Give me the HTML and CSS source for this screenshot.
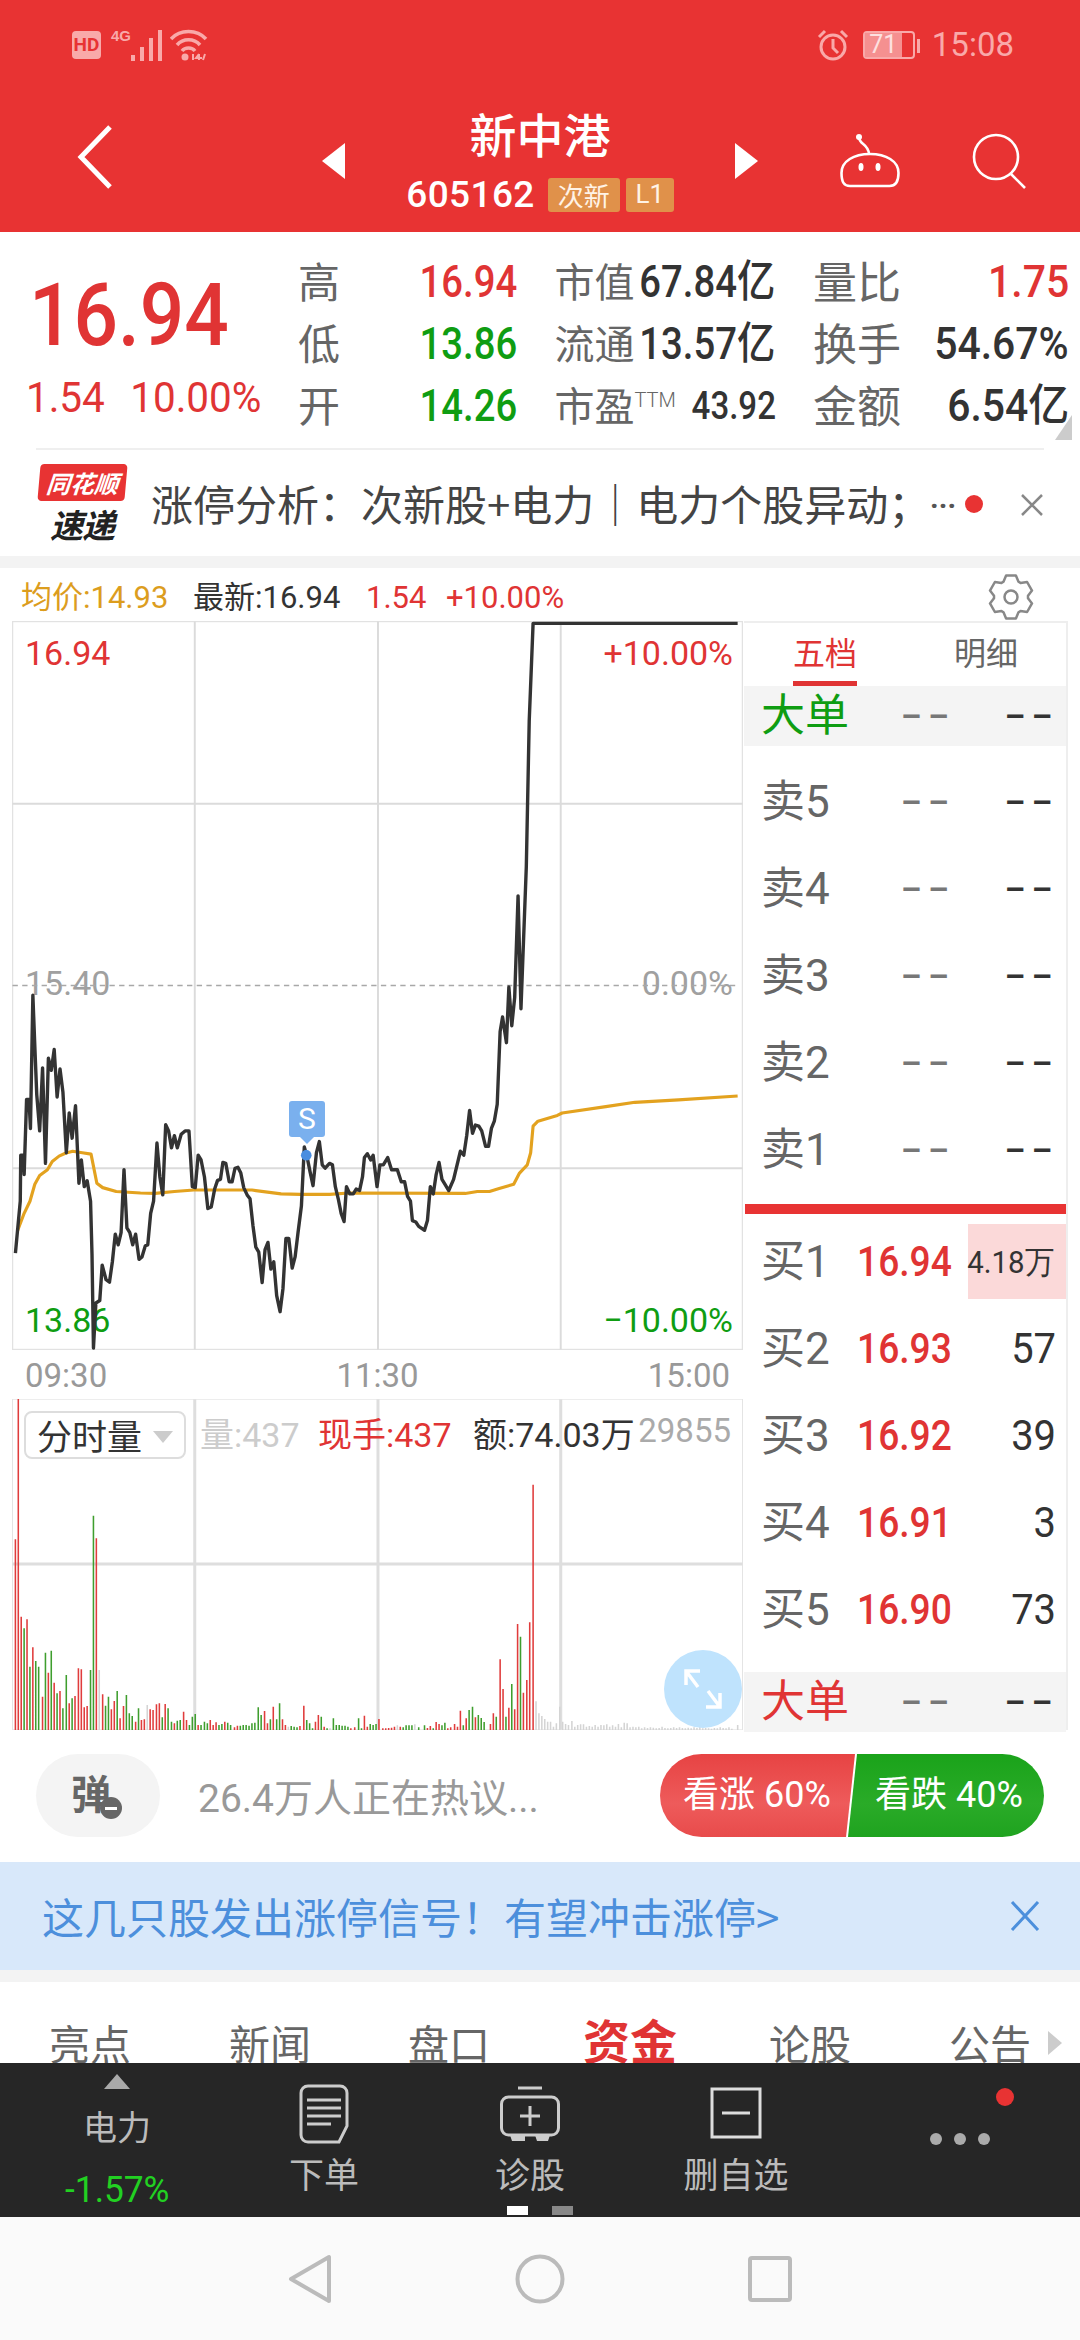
FILE: index.html
```html
<!DOCTYPE html>
<html lang="zh">
<head>
<meta charset="utf-8">
<title>新中港</title>
<link rel="stylesheet" href="styles.css">
</head>
<body>
<div class="page">
  <header class="head">
    <div class="status">
      <div class="status-left">
        <span class="hd">HD</span>
        <span class="net">4G</span>
        <svg class="signal" width="34" height="32" viewBox="0 0 34 32"><path d="M3 32v-6M12 32V18M21 32V9M30 32V1" stroke="#f9a9a9" stroke-width="4" fill="none"/></svg>
        <svg class="wifi" width="38" height="32" viewBox="0 0 38 32"><g fill="none" stroke="#f9a9a9" stroke-width="3.5"><path d="M1 10C10 0 27 0 36 10"/><path d="M7 16C13 9 24 9 30 16"/><path d="M12 22C15 18 22 18 25 22"/></g><circle cx="15" cy="28" r="3.5" fill="#f9a9a9"/><path d="M23 25v6M29 25l-3 4h6M29 25v6M35 25l-2 6" stroke="#f9a9a9" stroke-width="2" fill="none"/></svg>
      </div>
      <div class="status-right">
        <svg width="32" height="32" viewBox="0 0 32 32"><g fill="none" stroke="#f9a9a9" stroke-width="3"><circle cx="16" cy="18" r="12"/><path d="M16 10v9l5 5M2 8l6-6M30 8l-6-6"/></g></svg>
        <span class="battery"><span class="battery-num">71</span></span>
        <span class="clock">15:08</span>
      </div>
    </div>
    <nav class="nav">
      <svg class="back" width="36" height="64" viewBox="0 0 36 64"><path d="M33 2L4 32l29 30" fill="none" stroke="#fff" stroke-width="5"/></svg>
      <svg class="tri" width="23" height="36" viewBox="0 0 23 36"><path d="M23 0v36L0 18z" fill="#fff"/></svg>
      <div class="title">
        <div class="title-name">新中港</div>
        <div class="title-sub"><span class="code">605162</span><span class="tag tag-a">次新</span><span class="tag tag-b">L1</span></div>
      </div>
      <svg class="tri" width="23" height="36" viewBox="0 0 23 36"><path d="M0 0v36l23-18z" fill="#fff"/></svg>
      <svg class="robot" width="60" height="56" viewBox="0 0 60 56"><g fill="none" stroke="#fff" stroke-width="2.6"><path d="M1.5 40C1.5 28 14 21 30 21s28.500 7 28.500 19c0 9-3 13-9 13H10c-6 0-8.500-4-8.500-13z"/><path d="M19 4c0 8 9 6 10 17"/></g><circle cx="19" cy="4" r="3" fill="#fff"/><ellipse cx="21" cy="34" rx="2.500" ry="4" fill="#fff"/><ellipse cx="38" cy="34" rx="2.500" ry="4" fill="#fff"/></svg>
      <svg class="search" width="56" height="56" viewBox="0 0 56 56"><g fill="none" stroke="#fff" stroke-width="2.600"><circle cx="24" cy="24" r="22"/><path d="M39 41l14 14"/></g></svg>
    </nav>
  </header>

  <section class="quote">
    <div class="quote-left">
      <div class="price-big">16.94</div>
      <div class="price-sub"><span>1.54</span><span>10.00%</span></div>
    </div>
    <div class="quote-grid">
      <div class="cell"><span class="lab lab1">高</span><span class="val red">16.94</span></div>
      <div class="cell"><span class="lab">市值</span><span class="val">67.84亿</span></div>
      <div class="cell"><span class="lab lab3">量比</span><span class="val val3 red">1.75</span></div>
      <div class="cell"><span class="lab lab1">低</span><span class="val green">13.86</span></div>
      <div class="cell"><span class="lab">流通</span><span class="val">13.57亿</span></div>
      <div class="cell"><span class="lab lab3">换手</span><span class="val val3">54.67%</span></div>
      <div class="cell"><span class="lab lab1">开</span><span class="val green">14.26</span></div>
      <div class="cell"><span class="lab">市盈<sup class="ttm">TTM</sup></span><span class="val val-s">43.92</span></div>
      <div class="cell"><span class="lab lab3">金额</span><span class="val val3">6.54亿</span></div>
    </div>
    <span class="corner"></span>
  </section>

  <section class="ticker">
    <div class="logo">
      <span class="logo-top">同花顺</span>
      <span class="logo-bot">速递</span>
    </div>
    <div class="ticker-text">涨停分析：次新股+电力｜电力个股异动；</div>
    <span class="ticker-more">...</span>
    <span class="ticker-dot"></span>
    <svg class="ticker-x" width="24" height="22" viewBox="0 0 24 22"><path d="M2 1l20 20M22 1L2 21" stroke="#888" stroke-width="2.500" fill="none"/></svg>
  </section>

  <div class="band"></div>

  <section class="live">
    <span class="avg">均价:14.93</span>
    <span class="latest">最新:16.94</span>
    <span class="chg">1.54</span>
    <span class="chg pct">+10.00%</span>
    <svg class="gear" width="46" height="46" viewBox="-23 -23 46 46"><path d="M-7.500-15.300L-4.900-21.400H4.900L7.500-15.300 9.500-14.100 16.100-15 21-6.400 17-1.200V1.200L21 6.400 16.100 15 9.500 14.100 7.500 15.300 4.900 21.400H-4.900L-7.500 15.300-9.500 14.100-16.100 15-21 6.400-17 1.200V-1.200L-21-6.400-16.100-15-9.500-14.100z" fill="none" stroke="#888" stroke-width="2.500" stroke-linejoin="round"/><circle r="6.500" fill="none" stroke="#888" stroke-width="2.500"/></svg>
  </section>

  <section class="market">
    <div class="charts">
      <div class="chart">
        <span class="lbl tl red">16.94</span>
        <span class="lbl tr red">+10.00%</span>
        <span class="lbl ml grey">15.40</span>
        <span class="lbl mr grey">0.00%</span>
        <span class="lbl bl green">13.86</span>
        <span class="lbl br green">−10.00%</span>
        <svg class="chart-svg" width="731" height="729" viewBox="25 3 1508 1504">
          <rect x="26" y="4" width="1506" height="1502" fill="none" stroke="#e2e2e2" stroke-width="3"/>
          <path d="M402 4V1506M780 4V1506M1157 4V1506M26 380H1532M26 1132H1532" stroke="#dbdbdb" stroke-width="4" fill="none"/>
          <path d="M26 755H1524" stroke="#a8a8a8" stroke-width="3" stroke-dasharray="11 9" fill="none"/>
          <polyline class="avg-line" points="36,1262 50,1225 62,1200 72,1165 82,1147 98,1135 108,1118 122,1107 135,1101 150,1097 170,1100 188,1103 200,1163 212,1172 240,1180 290,1183 320,1184 360,1180 400,1177 520,1177 580,1185 620,1186 680,1186 720,1183 960,1184 985,1180 1010,1180 1030,1174 1060,1165 1072,1142 1088,1125 1095,1100 1100,1045 1110,1035 1150,1023 1160,1018 1250,1005 1310,996 1400,991 1522,983"/>
          <polyline class="price-line" points="32,1307 42,1200 43,1105 48,1105 50,1145 55,990 60,990 63,1050 68,775 72,880 76,980 82,1055 88,925 94,1122 100,905 106,930 112,887 118,985 124,927 130,975 137,1100 143,1018 149,1070 156,1003 163,1163 168,1115 174,1170 180,1158 187,1200 190,1310 193,1503 198,1410 206,1405 211,1332 219,1362 226,1367 232,1325 238,1268 244,1290 250,1265 256,1135 262,1255 268,1265 274,1290 280,1268 287,1320 293,1315 300,1292 305,1290 311,1225 317,1200 324,1080 330,1150 336,1187 342,1042 348,1055 354,1090 360,1065 366,1090 374,1062 382,1055 390,1055 397,1170 403,1172 409,1105 415,1115 422,1150 429,1215 436,1212 443,1175 449,1157 455,1155 460,1120 466,1122 473,1160 479,1160 485,1132 491,1130 497,1142 503,1172 510,1187 516,1195 522,1250 528,1295 534,1305 541,1368 547,1300 553,1285 559,1340 565,1325 571,1395 578,1428 584,1380 590,1277 596,1277 603,1338 609,1315 615,1265 622,1210 628,1088 634,1110 640,1140 646,1168 653,1100 659,1077 665,1125 671,1132 680,1122 686,1125 692,1170 698,1195 704,1225 710,1242 715,1170 722,1185 729,1185 735,1175 742,1178 748,1150 752,1110 758,1102 765,1115 770,1105 778,1170 784,1125 791,1125 800,1110 808,1135 820,1135 828,1160 835,1160 841,1190 847,1200 851,1240 858,1243 864,1252 876,1260 882,1240 888,1170 894,1185 900,1145 906,1120 912,1155 918,1165 926,1178 936,1155 950,1097 957,1105 963,1065 969,1013 975,1060 981,1043 988,1045 994,1055 1002,1087 1008,1087 1014,1050 1020,1035 1026,1000 1032,850 1037,820 1045,873 1050,758 1056,838 1062,780 1069,570 1075,803 1086,510 1092,210 1100,8 1522,8"/>
          <circle cx="632" cy="1105" r="11" fill="#4a8ee0"/>
        </svg>
        <span class="s-mark">S</span>
      </div>
      <div class="axis"><span>09:30</span><span>11:30</span><span>15:00</span></div>
      <div class="vol">
        <svg class="vol-svg" width="731" height="331" viewBox="25 57 1508 993" preserveAspectRatio="none">
          <rect x="26" y="58" width="1506" height="991" fill="none" stroke="#e4e4e4" stroke-width="2"/>
          <path d="M402 58V1049M780 58V1049M1157 58V1049M26 552H1532" stroke="#dedede" stroke-width="3" fill="none" vector-effect="non-scaling-stroke"/>
          <path class="bar-grey" d="M205 1050V870M304 1050V975M595 1050V1040M681 1050V1045M820 1050V1036M856 1050V1033M1106 1050V964M1112 1050V1000M1118 1050V1008M1124 1050V1017M1130 1050V1025M1136 1050V1025M1142 1050V1040M1148 1050V1030M1155 1050V980M1161 1050V1025M1167 1050V1032M1173 1050V1035M1180 1050V1023M1186 1050V1040M1192 1050V1035M1198 1050V1033M1204 1050V1033M1210 1050V1040M1216 1050V1038M1222 1050V1040M1228 1050V1035M1234 1050V1040M1240 1050V1035M1246 1050V1036M1252 1050V1033M1258 1050V1040M1264 1050V1036M1270 1050V1040M1276 1050V1032M1282 1050V1042M1288 1050V1028M1294 1050V1030M1300 1050V1042M1306 1050V1040M1312 1050V1042M1318 1050V1040M1324 1050V1045M1330 1050V1042M1336 1050V1044M1342 1050V1042M1348 1050V1043M1354 1050V1045M1360 1050V1044M1366 1050V1040M1372 1050V1044M1378 1050V1045M1384 1050V1044M1390 1050V1042M1396 1050V1044M1402 1050V1042M1408 1050V1044M1414 1050V1045M1420 1050V1043M1426 1050V1045M1432 1050V1042M1438 1050V1044M1444 1050V1040M1450 1050V1045M1456 1050V1044M1462 1050V1045M1468 1050V1046M1474 1050V1044M1480 1050V1045M1486 1050V1042M1492 1050V1044M1498 1050V1045M1504 1050V1042M1510 1050V1046M1522 1050V1035"/>
          <path class="bar-green" d="M50 1050V745M62 1050V860M74 1050V843M80 1050V860M94 1050V818M106 1050V812M118 1050V940M130 1050V985M137 1050V885M149 1050V955M187 1050V870M193 1050V407M218 1050V977M224 1050V950M242 1050V933M261 1050V945M267 1050V1000M273 1050V1008M286 1050V985M335 1050V1012M347 1050V985M354 1050V1025M366 1050V1022M372 1050V1020M391 1050V1035M397 1050V1010M403 1050V1002M415 1050V1035M422 1050V1025M428 1050V1030M452 1050V1035M458 1050V1032M470 1050V1028M476 1050V1035M496 1050V1037M502 1050V1035M508 1050V1035M514 1050V1037M520 1050V1030M526 1050V1028M533 1050V982M539 1050V1005M558 1050V1018M571 1050V1018M577 1050V970M601 1050V1038M607 1050V1040M613 1050V1042M633 1050V1020M639 1050V1030M645 1050V1045M663 1050V1010M675 1050V1045M688 1050V1015M694 1050V1035M700 1050V1035M706 1050V1037M712 1050V1037M718 1050V1040M740 1050V1015M746 1050V1045M764 1050V1032M770 1050V1035M776 1050V1032M832 1050V1042M838 1050V1036M844 1050V1036M850 1050V1036M864 1050V1042M876 1050V1036M894 1050V1045M912 1050V1036M918 1050V1028M956 1050V1036M968 1050V990M975 1050V980M987 1050V1005M993 1050V1014M999 1050V1026M1024 1050V1010M1044 1050V1010M1056 1050V912M1074 1050V770"/>
          <path class="bar-red" d="M32 1050V478M38 1050V57M44 1050V710M56 1050V718M68 1050V802M88 1050V950M100 1050V878M112 1050V908M124 1050V933M143 1050V970M155 1050V948M162 1050V865M168 1050V868M174 1050V982M180 1050V978M199 1050V475M212 1050V943M230 1050V988M236 1050V963M248 1050V1015M255 1050V978M280 1050V1025M292 1050V1020M298 1050V1018M310 1050V988M316 1050V990M323 1050V973M329 1050V970M341 1050V972M360 1050V1030M379 1050V995M385 1050V1020M409 1050V1035M434 1050V1020M440 1050V1035M446 1050V1027M464 1050V1025M484 1050V1042M490 1050V1037M546 1050V993M552 1050V1030M564 1050V980M583 1050V1018M589 1050V1035M619 1050V1038M627 1050V977M651 1050V1025M657 1050V1005M669 1050V1040M724 1050V1045M732 1050V1042M752 1050V1007M758 1050V1040M782 1050V1017M790 1050V1045M796 1050V1045M802 1050V1044M808 1050V1043M814 1050V1040M826 1050V1040M882 1050V1044M888 1050V1038M900 1050V1026M906 1050V1032M924 1050V1045M930 1050V1042M938 1050V1032M944 1050V1040M950 1050V992M962 1050V1015M981 1050V1012M1012 1050V1032M1018 1050V1000M1032 1050V838M1038 1050V927M1050 1050V983M1062 1050V988M1068 1050V732M1080 1050V938M1087 1050V900M1093 1050V727M1100 1050V314"/>
        </svg>
        <div class="vol-head">
          <span class="select">分时量<i class="select-arrow"></i></span>
          <span class="vh vh-a">量:437</span>
          <span class="vh vh-b">现手:437</span>
          <span class="vh vh-c">额:74.03万</span>
          <span class="vh vh-d">29855</span>
        </div>
        <div class="expand">
          <svg width="40" height="42" viewBox="0 0 40 42"><path d="M3 17V3h14M3 3l12 16M37 25v14H23M37 39L25 23" fill="none" stroke="#fff" stroke-width="3.500"/></svg>
        </div>
      </div>
    </div>

    <aside class="book">
      <div class="tabs">
        <span class="tab tab-on">五档</span>
        <span class="tab">明细</span>
      </div>
      <div class="big-row big-green"><span class="r-lab">大单</span><span class="r-price dash">––</span><span class="r-vol dash">––</span></div>
      <div class="rows">
        <div class="row"><span class="r-lab">卖5</span><span class="r-price dash">––</span><span class="r-vol dash">––</span></div>
        <div class="row"><span class="r-lab">卖4</span><span class="r-price dash">––</span><span class="r-vol dash">––</span></div>
        <div class="row"><span class="r-lab">卖3</span><span class="r-price dash">––</span><span class="r-vol dash">––</span></div>
        <div class="row"><span class="r-lab">卖2</span><span class="r-price dash">––</span><span class="r-vol dash">––</span></div>
        <div class="row"><span class="r-lab">卖1</span><span class="r-price dash">––</span><span class="r-vol dash">––</span></div>
      </div>
      <div class="split"></div>
      <div class="rows rows-buy">
        <div class="row"><i class="highlight"></i><span class="r-lab">买1</span><span class="r-price">16.94</span><span class="r-vol r-small">4.18万</span></div>
        <div class="row"><span class="r-lab">买2</span><span class="r-price">16.93</span><span class="r-vol">57</span></div>
        <div class="row"><span class="r-lab">买3</span><span class="r-price">16.92</span><span class="r-vol">39</span></div>
        <div class="row"><span class="r-lab">买4</span><span class="r-price">16.91</span><span class="r-vol">3</span></div>
        <div class="row"><span class="r-lab">买5</span><span class="r-price">16.90</span><span class="r-vol">73</span></div>
      </div>
      <div class="big-row big-red"><span class="r-lab">大单</span><span class="r-price dash">––</span><span class="r-vol dash">––</span></div>
    </aside>
  </section>

  <section class="talk">
    <div class="danmu"><span class="danmu-t">弹</span><span class="danmu-off"></span></div>
    <span class="talk-text">26.4万人正在热议...</span>
    <div class="vote">
      <span class="vote-up">看涨 60%</span>
      <span class="vote-down">看跌 40%</span>
    </div>
  </section>

  <section class="promo">
    <span class="promo-text">这几只股发出涨停信号！有望冲击涨停&gt;</span>
    <svg width="30" height="30" viewBox="0 0 30 30"><path d="M2 1l26 28M28 1L2 29" stroke="#4c8fdc" stroke-width="3" fill="none"/></svg>
  </section>

  <div class="band"></div>

  <section class="news-tabs">
    <span class="nt nt1">亮点</span>
    <span class="nt nt2">新闻</span>
    <span class="nt nt3">盘口</span>
    <span class="nt nt4">资金</span>
    <span class="nt nt5">论股</span>
    <span class="nt nt6">公告</span>
    <i class="nt-arrow"></i>
  </section>

  <section class="toolbar">
    <div class="sector">
      <i class="sector-up"></i>
      <span class="sector-name">电力</span>
      <span class="sector-pct">-1.57%</span>
    </div>
    <div class="tool tool1">
      <svg width="50" height="60" viewBox="0 0 50 60"><path d="M9 2h32c4 0 7 3 7 7v33l-8 16H9c-4 0-7-3-7-7V9c0-4 3-7 7-7z" fill="none" stroke="#ccc" stroke-width="3"/><path d="M8 16h34M8 24h34M8 32h34M8 40h24" stroke="#ccc" stroke-width="3"/></svg>
      <span>下单</span>
    </div>
    <div class="tool tool2">
      <svg width="60" height="56" viewBox="0 0 60 56"><g fill="none" stroke="#ccc" stroke-width="3"><path d="M18 2h24"/><rect x="1.500" y="11" width="57" height="38" rx="7"/><path d="M30 20v20M20 30h20"/></g><path d="M10 49h15v6H12zM35 49h15l-2 6H37z" fill="#ccc"/></svg>
      <span>诊股</span>
    </div>
    <div class="tool tool3">
      <svg width="52" height="52" viewBox="0 0 52 52"><rect x="2" y="2" width="48" height="48" fill="none" stroke="#ddd" stroke-width="3"/><path d="M12 26h28" stroke="#ddd" stroke-width="3"/></svg>
      <span>删自选</span>
    </div>
    <div class="more"><i></i><i></i><i></i></div>
    <span class="more-dot"></span>
    <div class="pager"><i class="pg-on"></i><i class="pg-off"></i></div>
  </section>

  <footer class="sysnav">
    <svg width="44" height="50" viewBox="0 0 44 50"><path d="M41 3v44L3 25z" fill="none" stroke="#bbb" stroke-width="4" stroke-linejoin="round"/></svg>
    <svg width="50" height="50" viewBox="0 0 50 50"><circle cx="25" cy="25" r="22.500" fill="none" stroke="#bbb" stroke-width="4"/></svg>
    <svg width="44" height="46" viewBox="0 0 44 46"><rect x="2" y="2" width="40" height="42" rx="2" fill="none" stroke="#bbb" stroke-width="4"/></svg>
  </footer>
</div>
</body>
</html>
```

FILE: styles.css
```css
* { box-sizing: border-box; }
html, body { margin: 0; padding: 0; background: #fff; }
body { font-family: Roboto, "Noto Sans CJK SC", sans-serif; color: #333; }
i { display: block; font-style: normal; }
svg { display: block; flex: none; }
.page { width: 1080px; height: 2340px; display: flex; flex-direction: column; overflow: hidden; }
.red { color: #e03434; }
.green { color: #0f9d12; }
.grey { color: #a0a0a0; }

/* header */
.head { height: 232px; background: #e83333; flex: none; }
.status { height: 90px; display: flex; justify-content: space-between; align-items: center; padding: 0 66px 0 72px; }
.status-left, .status-right { display: flex; align-items: center; }
.hd { width: 29px; height: 28px; border-radius: 4px; background: #f9a9a9; color: #e83333; font: 700 19px/28px Roboto, sans-serif; text-align: center; }
.net { color: #f9a9a9; font: 700 15px/14px "Liberation Sans", sans-serif; margin: -18px 0 0 10px; width: 19px; }
.signal { margin-left: 0; }
.wifi { margin-left: 6px; }
.status-right { gap: 14px; }
.battery { width: 52px; height: 28px; border: 2px solid #f9a9a9; border-radius: 4px; position: relative; display: block; }
.battery::after { content: ""; position: absolute; right: -7px; top: 6px; width: 3px; height: 14px; background: #f9a9a9; }
.battery-num { display: block; width: 37px; height: 24px; background: #f59090; font: 400 25px/24px Roboto, sans-serif; text-align: center; color: #fde0e0; }
.clock { color: #f9a9a9; font: 400 33px/34px Roboto, sans-serif; margin-left: 3px; }
.nav { height: 142px; display: flex; align-items: center; padding-left: 77px; }
.back { margin: -8px 209px 0 0; }
.title { width: 390px; display: flex; flex-direction: column; align-items: center; color: #fff; }
.title-name { font: 500 47px/48px "Noto Sans CJK SC", sans-serif; height: 48px; }
.title-sub { display: flex; align-items: center; margin-top: 20px; height: 36px; }
.code { font: 500 37px/36px Roboto, sans-serif; letter-spacing: .4px; margin-right: 13px; }
.tag { height: 34px; background: #e0914a; border-radius: 3px; color: #fff3e6; font: 400 26px/33px "Noto Sans CJK SC", sans-serif; text-align: center; display: block; }
.tag-a { width: 72px; margin-right: 6px; }
.tag-b { width: 48px; font-family: Roboto, sans-serif; }
.robot { margin-left: 82px; }
.search { margin-left: 72px; }

/* quote */
.quote { height: 216px; flex: none; display: flex; position: relative; }
.quote-left { width: 298px; padding-left: 26px; }
.price-big { font: 500 87px/87px Roboto, sans-serif; color: #e03434; margin-top: 40px; margin-left: 3px; transform: scaleX(.9); transform-origin: 0 50%; height: 87px; }
.price-sub { display: flex; gap: 27px; font: 400 43px/44px Roboto, sans-serif; color: #e03434; margin-top: 16px; transform: scaleX(.94); transform-origin: 0 50%; white-space: nowrap; }
.quote-grid { width: 771px; display: grid; grid-template-columns: 219px 221px 256px; grid-auto-rows: 62px; column-gap: 37.500px; padding-top: 19px; }
.cell { display: flex; justify-content: space-between; align-items: center; }
.lab { font: 400 40px/46px "Noto Sans CJK SC", sans-serif; color: #666; white-space: nowrap; margin-top: -5px; }
.lab1 { font-size: 42px; }
.lab3 { font-size: 44px; }
.val { font: 500 44px/46px Roboto, "Noto Sans CJK SC", sans-serif; display: block; transform: scaleX(.87); transform-origin: 100% 50%; white-space: nowrap; margin-left: -40px; }
.val3 { transform: scaleX(.93); }
.val-s { font-size: 38px; }
.ttm { font: 300 20px/20px Roboto, sans-serif; vertical-align: 14px; }
.corner { position: absolute; right: 8px; top: 183px; width: 0; height: 0; border-left: 17px solid transparent; border-bottom: 25px solid #ccc; }

/* ticker */
.ticker { height: 108px; flex: none; margin: 0 36px; border-top: 2px solid #efefef; display: flex; align-items: center; position: relative; }
.logo { width: 90px; display: flex; flex-direction: column; align-items: center; margin-left: 1px; position: relative; }
.logo-top { display: block; width: 87px; height: 37px; background: #e83333; border-radius: 4px; transform: skewX(-5deg); color: #fff; font: italic 700 24px/37px "Noto Sans CJK SC", sans-serif; text-align: center; white-space: nowrap; }
.logo-bot { display: block; color: #222; font: italic 700 33px/36px "Noto Sans CJK SC", sans-serif; margin-top: 5px; letter-spacing: -1px; }
.ticker-text { margin-left: 24px; font: 400 42px/48px "Noto Sans CJK SC", sans-serif; color: #444; white-space: nowrap; }
.ticker-more { position: absolute; left: 894px; top: 28px; font: 700 30px/40px Roboto, sans-serif; color: #555; }
.ticker-dot { position: absolute; left: 929px; top: 45px; width: 18px; height: 18px; border-radius: 50%; background: #e83333; }
.ticker-x { position: absolute; left: 984px; top: 44px; }
.band { height: 12px; flex: none; background: #f3f3f3; }

/* live */
.live { height: 53px; flex: none; display: flex; align-items: center; padding: 6px 0 0 21px; font: 400 31px/36px Roboto, "Noto Sans CJK SC", sans-serif; position: relative; }
.avg { color: #dc9d1e; width: 172px; white-space: nowrap; }
.latest { color: #333; width: 173px; white-space: nowrap; }
.chg { color: #e03434; width: 80px; }
.pct { width: auto; }
.gear { position: absolute; left: 988px; top: 6px; }

/* market */
.market { height: 1109px; flex: none; display: flex; padding-left: 12px; }
.charts { width: 732px; display: flex; flex-direction: column; }
.chart { height: 730px; position: relative; flex: none; }
.chart-svg { position: absolute; left: 0; top: 0; }
.lbl { position: absolute; font: 400 34px/36px Roboto, sans-serif; }
.tl { left: 13px; top: 14px; }
.tr { right: 11px; top: 14px; }
.ml { left: 13px; top: 344px; }
.mr { right: 11px; top: 344px; }
.bl { left: 13px; top: 681px; }
.br { right: 11px; top: 681px; }
.price-line { fill: none; stroke: #333; stroke-width: 7; stroke-linejoin: round; }
.avg-line { fill: none; stroke: #e3a21f; stroke-width: 6.500; stroke-linejoin: round; }
.s-mark { position: absolute; left: 277px; top: 480px; width: 36px; height: 36px; background: #7ab0ee; border-radius: 3px; color: #fff; font: 400 30px/36px Roboto, sans-serif; text-align: center; }
.s-mark::after { content: ""; position: absolute; left: 11px; top: 36px; border: 7px solid transparent; border-top-color: #7ab0ee; border-bottom: 0; }
.axis { height: 48px; flex: none; display: flex; justify-content: space-between; padding: 3px 14px 0 13px; font: 400 33px/44px Roboto, sans-serif; color: #999; }
.vol { height: 331px; position: relative; flex: none; }
.vol-svg { position: absolute; left: 0; top: 0; }
.bar-red, .bar-green, .bar-grey { fill: none; stroke-width: 3.200; }
.bar-red { stroke: #e03c3c; }
.bar-green { stroke: #3f9e2e; }
.bar-grey { stroke: #d4d4d4; }
.vol-head { position: absolute; left: 12px; top: 12px; right: 13px; display: flex; align-items: center; height: 48px; }
.select { width: 162px; height: 48px; border: 2px solid #ddd; border-radius: 8px; background: #fff; font: 400 35px/44px "Noto Sans CJK SC", sans-serif; color: #333; padding-left: 11px; position: relative; display: block; }
.select-arrow { position: absolute; left: 127px; top: 18px; border: 10px solid transparent; border-top: 12px solid #ccc; border-bottom: 0; }
.vh { font: 400 34px/40px Roboto, "Noto Sans CJK SC", sans-serif; white-space: nowrap; }
.vh-a { color: #ccc; margin-left: 14px; width: 118px; }
.vh-b { color: #e03434; width: 155px; }
.vh-c { color: #333; }
.vh-d { color: #aaa; margin-left: auto; margin-top: -8px; font-size: 33px; }
.expand { position: absolute; left: 652px; top: 251px; width: 78px; height: 78px; border-radius: 50%; background: #bfe3fd; display: flex; align-items: center; justify-content: center; }

/* book */
.book { width: 324px; flex: none; border-right: 2px solid #eee; display: flex; flex-direction: column; }
.tabs { height: 65px; flex: none; display: flex; border-top: 2px solid #eee; padding-left: 49px; }
.tab { width: 64px; height: 63px; font: 400 32px/56px "Noto Sans CJK SC", sans-serif; color: #666; white-space: nowrap; margin-right: 97px; text-align: center; }
.tab-on { color: #e03434; border-bottom: 5px solid #e03434; }
.big-row { display: flex; align-items: center; height: 60px; flex: none; background: #f4f4f4; padding: 0 10px 0 17px; }
.big-green .r-lab { color: #0f9d12; }
.big-red .r-lab { color: #e03434; }
.rows { padding-top: 12px; flex: none; }
.rows-buy { padding-top: 4px; margin-bottom: 19px; }
.row { height: 87px; display: flex; align-items: center; padding: 0 10px 0 17px; position: relative; }
.r-lab { width: 96px; font: 400 44px/50px Roboto, "Noto Sans CJK SC", sans-serif; color: #666; white-space: nowrap; }
.r-price { width: 102px; font: 500 42px/46px Roboto, sans-serif; color: #e03434; transform: scaleX(.885); transform-origin: 0 50%; white-space: nowrap; }
.r-vol { flex: 1; text-align: right; font: 400 42px/46px Roboto, sans-serif; color: #333; transform: scaleX(.95); transform-origin: 100% 50%; }
.r-small { font-size: 32px; transform: scaleX(.92); position: relative; white-space: nowrap; margin-right: 2px; }
.dash { font: 700 32px/46px Roboto, sans-serif; letter-spacing: 7px; transform: none; }
.r-price.dash { color: #777; margin-left: 44px; width: 58px; }
.r-vol.dash { color: #333; margin-right: -3px; }
.highlight { position: absolute; right: 0; top: 6px; width: 98px; height: 75px; background: #fbd9d9; }
.split { height: 10px; flex: none; background: #e83333; margin: 11px 0 0 1px; }

/* talk */
.talk { height: 132px; flex: none; display: flex; align-items: center; padding: 0 36px; position: relative; }
.danmu { width: 124px; height: 83px; border-radius: 42px; background: #f4f4f4; position: relative; margin-top: -1px; }
.danmu-t { position: absolute; left: 35px; top: 13px; font: 700 40px/50px "Noto Sans CJK SC", sans-serif; color: #666; }
.danmu-off { position: absolute; left: 64px; top: 43px; width: 22px; height: 22px; border-radius: 50%; background: #666; }
.danmu-off::after { content: ""; position: absolute; left: 5px; top: 10px; width: 12px; height: 3px; background: #fff; }
.talk-text { margin-left: 38px; font: 400 39px/44px Roboto, "Noto Sans CJK SC", sans-serif; color: #999; white-space: nowrap; margin-top: 5px; }
.vote { margin-left: auto; width: 384px; height: 83px; margin-top: -1px; position: relative; border-radius: 42px; overflow: hidden; color: #fff; font: 400 36px/83px Roboto, "Noto Sans CJK SC", sans-serif; }
.vote-up { position: absolute; left: 0; top: 0; width: 195px; height: 83px; padding-left: 23px; background: linear-gradient(#e74343, #ee5b5b 60%, #e84b4b); clip-path: polygon(0 0, 100% 0, 95.400% 100%, 0 100%); white-space: nowrap; }
.vote-down { position: absolute; left: 186px; top: 0; width: 198px; height: 83px; padding-left: 29px; background: linear-gradient(#1aa31a, #2aab28 60%, #1fa31f); clip-path: polygon(11px 0, 100% 0, 100% 100%, 2px 100%); white-space: nowrap; }

/* promo */
.promo { height: 108px; flex: none; background: #d8e8fa; display: flex; align-items: center; justify-content: space-between; padding: 0 40px 0 42px; }
.promo-text { font: 400 42px/48px "Noto Sans CJK SC", sans-serif; color: #4c8fdc; white-space: nowrap; }

/* news tabs */
.news-tabs { height: 81px; flex: none; position: relative; overflow: hidden; }
.nt { position: absolute; top: 35px; font: 400 41px/50px "Noto Sans CJK SC", sans-serif; color: #666; white-space: nowrap; }
.nt1 { left: 49px; } .nt2 { left: 229px; } .nt3 { left: 408px; } .nt5 { left: 769px; } .nt6 { left: 949px; }
.nt4 { left: 583px; top: 29px; font-size: 47px; font-weight: 700; color: #e03434; line-height: 56px; }
.nt-arrow { position: absolute; left: 1048px; top: 49px; border: 12px solid transparent; border-left: 14px solid #ccc; border-right: 0; }

/* toolbar */
.toolbar { height: 154px; flex: none; background: #262626; position: relative; display: flex; }
.sector { width: 234px; display: flex; flex-direction: column; align-items: center; }
.sector-up { margin-top: 11px; border: 13px solid transparent; border-bottom: 15px solid #aaa; border-top: 0; }
.sector-name { font: 400 34px/40px "Noto Sans CJK SC", sans-serif; color: #bbb; margin-top: 17px; }
.sector-pct { font: 400 36px/40px Roboto, sans-serif; color: #22d022; margin-top: 24px; transform: scaleX(.98); }
.tool { position: absolute; top: 21px; display: flex; flex-direction: column; align-items: center; color: #bbb; font: 400 35px/44px "Noto Sans CJK SC", sans-serif; height: 111px; justify-content: space-between; white-space: nowrap; }
.tool1 { left: 284px; width: 80px; }
.tool2 { left: 490px; width: 80px; top: 23px; height: 109px; }
.tool3 { left: 676px; width: 120px; top: 24px; height: 108px; }
.more { position: absolute; left: 930px; top: 70px; display: flex; gap: 12px; }
.more i { width: 12px; height: 12px; border-radius: 50%; background: #aaa; }
.more-dot { position: absolute; left: 996px; top: 25px; width: 18px; height: 18px; border-radius: 50%; background: #e83333; }
.pager { position: absolute; left: 507px; top: 143px; display: flex; gap: 24px; }
.pg-on, .pg-off { width: 21px; height: 9px; }
.pg-on { background: #fff; }
.pg-off { background: #888; }

/* system nav */
.sysnav { flex: 1; background: #fafafa; display: flex; align-items: center; padding: 0 288px; justify-content: space-between; }
```
